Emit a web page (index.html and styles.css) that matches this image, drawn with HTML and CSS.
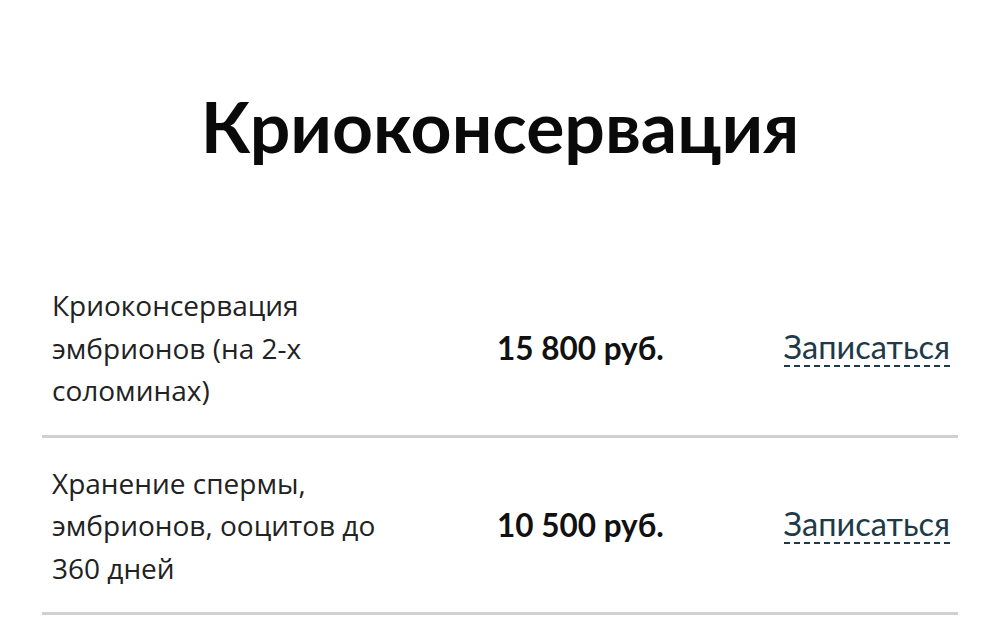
FILE: index.html
```html
<!DOCTYPE html>
<html lang="ru">
<head>
<meta charset="utf-8">
<link rel="stylesheet" href="styles.css">
</head>
<body>
<main class="page">
  <h1 class="title">Криоконсервация</h1>
  <div class="list">
    <div class="row">
      <div class="name">Криоконсервация эмбрионов (на 2-х соломинах)</div>
      <div class="price">15 800 руб.</div>
      <a class="link" href="#">Записаться</a>
    </div>
    <div class="row">
      <div class="name">Хранение спермы, эмбрионов, ооцитов до 360 дней</div>
      <div class="price">10 500 руб.</div>
      <a class="link" href="#">Записаться</a>
    </div>
  </div>
</main>
</body>
</html>
```

FILE: styles.css
```css
* { box-sizing: border-box; }
html, body { margin: 0; padding: 0; background: #fff; }
body { font-family: "Open Sans", "Liberation Sans", sans-serif; color: #1a1a1a; }
.page { padding: 0 42px; }
.title {
  margin: 0;
  padding-top: 84px;
  height: 260px;
  text-align: center;
  font-family: Lato, "Open Sans", sans-serif;
  font-weight: 700;
  font-size: 71.5px;
  line-height: 82px;
  color: #0a0a0a;
}
.row {
  display: grid;
  grid-template-columns: 445px 1fr auto;
  align-items: center;
  padding: 24px 8px 23px 10px;
  border-bottom: 3px solid #d0d0d0;
}
.name {
  max-width: 345px;
  font-size: 28px;
  line-height: 42.5px;
  font-weight: 400;
  color: #222;
}
.price {
  font-family: Lato, sans-serif;
  font-weight: 700;
  font-size: 31.5px;
  color: #111;
}
.link {
  font-family: Lato, sans-serif;
  font-size: 32.5px;
  color: #1e3a48;
  text-decoration: none;
  border-bottom: 2px dashed #1e3a48;
  line-height: 36px;
}
```
